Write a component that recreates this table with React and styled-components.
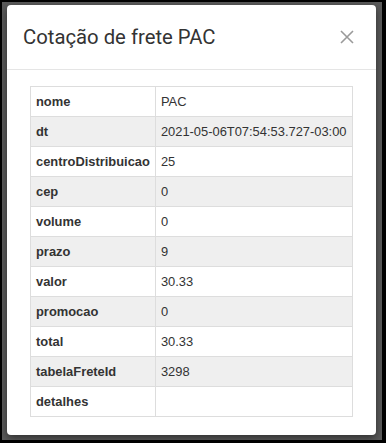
import React from "react";
import styled, { createGlobalStyle } from "styled-components";

const Global = createGlobalStyle`
  html, body {
    margin: 0;
    padding: 0;
    background: #000;
  }
  #root {
    width: 386px;
    height: 443px;
  }
`;

const Backdrop = styled.div`
  box-sizing: border-box;
  margin: 2px 4px 0 2px;
  height: 438px;
  background: #5b5b5b;
  padding: 3px 6px 5px 5px;
`;

const Modal = styled.div`
  height: 100%;
  background: #fff;
  border-radius: 4px;
  box-shadow: 0 3px 9px rgba(0, 0, 0, 0.5);
  display: flex;
  flex-direction: column;
`;

const Header = styled.div`
  box-sizing: border-box;
  height: 65px;
  display: flex;
  align-items: center;
  justify-content: space-between;
  padding: 0 22px 0 16px;
  border-bottom: 1px solid #e5e5e5;
`;

const Title = styled.h4`
  margin: 0;
  font-family: Roboto, "Noto Sans", sans-serif;
  font-size: 20.3px;
  font-weight: 400;
  color: #333;
`;

const Close = styled.button`
  border: 0;
  background: none;
  padding: 0;
  width: 14px;
  height: 14px;
  display: flex;
`;

const Body = styled.div`
  padding: 16px 23px 18px 23px;
`;

const Table = styled.table`
  width: 322px;
  border-collapse: collapse;
  font-family: "Liberation Sans", Arial, sans-serif;
  font-size: 12.9px;
  color: #333;
`;

const Row = styled.tr`
  height: 30px;
  background: ${(p) => (p.striped ? "#efefef" : "#fff")};
`;

const Cell = styled.td`
  border: 1px solid #ddd;
  padding: 0 5px;
  width: ${(p) => p.width || "auto"};
  font-weight: ${(p) => (p.head ? 700 : 400)};
  white-space: nowrap;
`;

const rows = [
  ["nome", "PAC"],
  ["dt", "2021-05-06T07:54:53.727-03:00"],
  ["centroDistribuicao", "25"],
  ["cep", "0"],
  ["volume", "0"],
  ["prazo", "9"],
  ["valor", "30.33"],
  ["promocao", "0"],
  ["total", "30.33"],
  ["tabelaFreteId", "3298"],
  ["detalhes", ""],
];

export default function App() {
  return (
    <>
      <Global />
      <Backdrop>
        <Modal>
          <Header>
            <Title>Cotação de frete PAC</Title>
            <Close aria-label="fechar">
              <svg width="14" height="14" viewBox="0 0 14 14">
                <path d="M1 1 L13 13 M13 1 L1 13" stroke="#9a9a9a" strokeWidth="1.6" />
              </svg>
            </Close>
          </Header>
          <Body>
            <Table>
              <tbody>
                {rows.map(([k, v], i) => (
                  <Row key={k} striped={i % 2 === 1}>
                    <Cell head width="114px">{k}</Cell>
                    <Cell>{v}</Cell>
                  </Row>
                ))}
              </tbody>
            </Table>
          </Body>
        </Modal>
      </Backdrop>
    </>
  );
}
